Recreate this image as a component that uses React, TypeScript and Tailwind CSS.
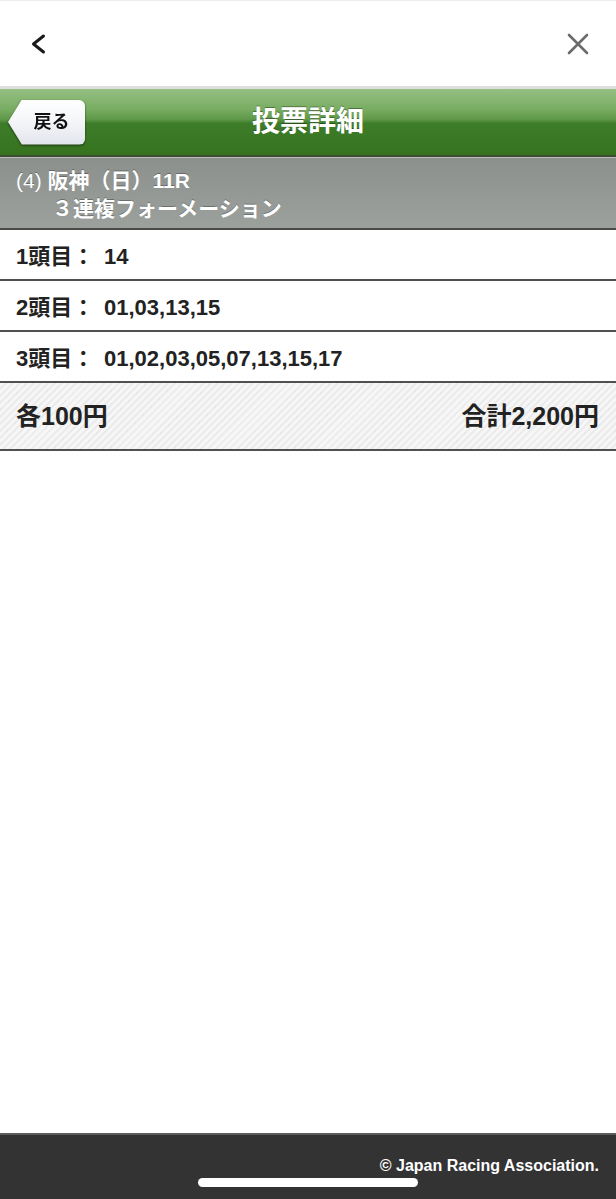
import React from 'react';

const rows = [
  { label: '1頭目：', value: '14' },
  { label: '2頭目：', value: '01,03,13,15' },
  { label: '3頭目：', value: '01,02,03,05,07,13,15,17' },
];

export default function App() {
  return (
    <div className="relative flex h-[1199px] flex-col bg-white font-['Liberation_Sans','Noto_Sans_CJK_JP',sans-serif]">
      {/* browser top bar */}
      <div className="flex h-[86px] items-center justify-between border-t border-[#ececec] pl-[30px] pr-[26px]">
        <svg width="16" height="22" viewBox="0 0 16 22" fill="none">
          <path d="M13.5 3 L3.5 11 L13.5 19" stroke="#1a1a1a" strokeWidth="3" strokeLinecap="round" strokeLinejoin="round" />
        </svg>
        <svg width="24" height="24" viewBox="0 0 24 24" fill="none">
          <path d="M3 3 L21 21 M21 3 L3 21" stroke="#6b6b6b" strokeWidth="2.6" strokeLinecap="round" />
        </svg>
      </div>
      <div className="h-[3px] bg-[#dcdedc]" />

      {/* green title bar */}
      <div className="grid h-[68px] grid-cols-[1fr_auto_1fr] items-center border-b-2 border-[#3c4a36] bg-[linear-gradient(to_bottom,#95c083_0%,#79ad63_30%,#5f9849_46%,#3d7c29_52%,#37731f_100%)]">
        <div className="pl-[8px] [filter:drop-shadow(0_1px_1px_rgba(0,0,0,0.55))]">
          <div className="flex h-[45px] w-[77px] items-center justify-center rounded-r-[6px] bg-[linear-gradient(to_bottom,#ffffff_0%,#f4f5f8_50%,#e2e4ec_100%)] pl-[10px] text-[18px] font-bold text-[#111] [clip-path:polygon(18%_0,100%_0,100%_100%,18%_100%,0_50%)]">
            戻る
          </div>
        </div>
        <h1 className="text-[28px] font-bold leading-none text-white [text-shadow:0_-1px_0_rgba(0,0,0,0.35)]">
          投票詳細
        </h1>
        <div />
      </div>

      {/* race info */}
      <div className="h-[73px] border-t border-[#b8bdb8] border-b-2 border-b-[#4a4a4a] bg-[linear-gradient(to_bottom,#8c908d,#9ca19d)] pl-4 pt-[9px] text-white [text-shadow:0_-1px_0_rgba(0,0,0,0.3)]">
        <p className="text-[21px] font-bold leading-[28px]">
          <span className="font-normal">(4)</span> 阪神（日）11R
        </p>
        <p className="pl-9 text-[21px] font-bold leading-[28px]">３連複フォーメーション</p>
      </div>

      {/* selections */}
      {rows.map((r) => (
        <div key={r.label} className="flex h-[51px] items-center border-b-2 border-[#505050] pl-4 pt-[3px] text-[22px] font-bold text-[#222]">
          <span className="w-[88px]">{r.label}</span>
          <span>{r.value}</span>
        </div>
      ))}

      {/* total */}
      <div className="flex h-[68px] items-center justify-between border-b-2 border-[#505050] bg-[repeating-linear-gradient(135deg,#f6f6f6_0px,#f6f6f6_3px,#ebebeb_3px,#ebebeb_5px)] pl-4 pr-[17px] pt-[2px] text-[25px] font-bold text-[#222]">
        <span>各100円</span>
        <span>合計2,200円</span>
      </div>

      <div className="flex-1" />

      {/* footer */}
      <div className="h-[66px] border-t-2 border-[#5c5c5c] bg-[#333333] pr-[17px] pt-[20px] text-right text-[16px] font-bold leading-[22px] text-white">
        © Japan Racing Association.
      </div>
      <div className="absolute bottom-[12px] left-1/2 h-[9px] w-[220px] -translate-x-1/2 rounded-full bg-white" />
    </div>
  );
}
